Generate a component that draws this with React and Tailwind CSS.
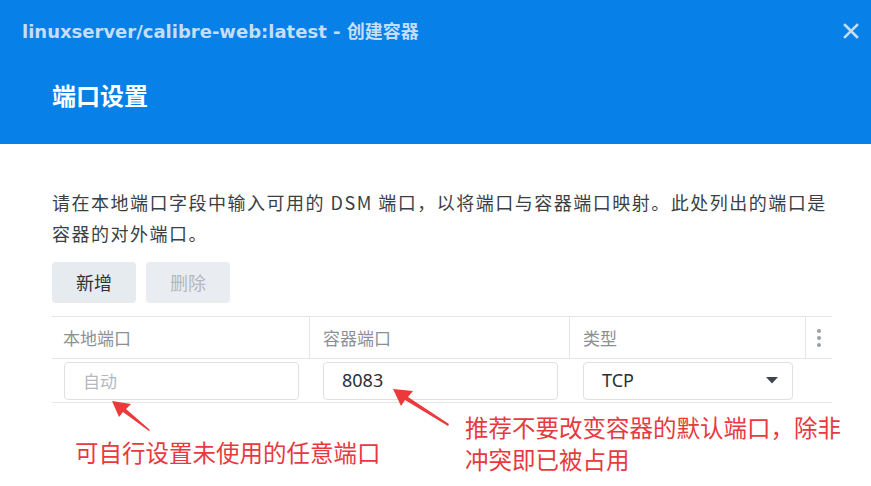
import React from "react";

const cjk = { fontFamily: '"Noto Sans CJK SC", "Noto Sans", sans-serif' };

export default function App() {
  return (
    <div className="relative w-[871px] h-[486px] overflow-hidden bg-white" style={cjk}>
      {/* Header */}
      <div className="h-[144px] bg-[#0780e8] flex flex-col">
        <div className="h-[62px] flex items-center justify-between pl-[22px] pr-[12px]">
          <div
            className="text-[18px] font-bold text-[#c4defa] leading-none"
            style={{ fontFamily: '"DejaVu Sans", "Noto Sans CJK SC", sans-serif' }}
          >
            linuxserver/calibre-web:latest - <span style={cjk} className="font-bold">创建容器</span>
          </div>
          <svg width="16" height="16" viewBox="0 0 16 16">
            <path d="M2 2 L14 14 M14 2 L2 14" stroke="#c4defa" strokeWidth="2.6" strokeLinecap="square" />
          </svg>
        </div>
        <div className="pl-[52px] mt-[21px] text-[24px] font-bold text-white leading-none">
          端口设置
        </div>
      </div>

      {/* Body */}
      <div className="pl-[52px] pt-[43px]">
        <p className="w-[800px] text-[18px] leading-[31px] text-[#3a3f45] tracking-[1.5px] whitespace-nowrap">
          请在本地端口字段中输入可用的 DSM 端口，以将端口与容器端口映射。此处列出的端口是
          <br />
          容器的对外端口。
        </p>

        <div className="mt-[13px] flex gap-[10px]">
          <div className="w-[84px] h-[41px] rounded-[4px] bg-[#e6ebf0] flex items-center justify-center text-[18px] text-[#2e3338]">
            新增
          </div>
          <div className="w-[84px] h-[41px] rounded-[4px] bg-[#e9edf1] flex items-center justify-center text-[18px] text-[#b2b8bf]">
            删除
          </div>
        </div>

        {/* Table */}
        <div className="mt-[13px] w-[780px] border-t border-[#e3e6ea]">
          <div className="flex h-[42px] border-b border-[#e3e6ea] text-[17px] text-[#8c9096]">
            <div className="w-[258px] flex items-center pl-[11px] border-r border-[#e3e6ea]">本地端口</div>
            <div className="w-[260px] flex items-center pl-[13px] border-r border-[#e3e6ea]">容器端口</div>
            <div className="w-[236px] flex items-center pl-[13px] border-r border-[#e3e6ea]">类型</div>
            <div className="flex-1 flex flex-col items-center justify-center gap-[3px]">
              <span className="w-[4px] h-[4px] rounded-full bg-[#9aa0a6]" />
              <span className="w-[4px] h-[4px] rounded-full bg-[#9aa0a6]" />
              <span className="w-[4px] h-[4px] rounded-full bg-[#9aa0a6]" />
            </div>
          </div>
          <div className="flex h-[44px] items-center border-b border-[#e3e6ea]">
            <div className="w-[258px] pl-[12px] pr-[11px]">
              <div className="h-[38px] rounded-[4px] border border-[#dde1e6] flex items-center pl-[18px] text-[17px] text-[#b5b9bf]">
                自动
              </div>
            </div>
            <div className="w-[260px] pl-[13px] pr-[12px]">
              <div
                className="h-[38px] rounded-[4px] border border-[#dde1e6] flex items-center pl-[18px] text-[18px] text-[#2b3036]"
                style={{ fontFamily: '"Noto Sans", sans-serif' }}
              >
                8083
              </div>
            </div>
            <div className="w-[236px] pl-[13px] pr-[13px]">
              <div className="h-[38px] rounded-[4px] border border-[#dde1e6] flex items-center justify-between pl-[18px] pr-[14px] text-[18px] text-[#2b3036]">
                <span style={{ fontFamily: '"Noto Sans", sans-serif' }}>TCP</span>
                <svg width="12" height="7" viewBox="0 0 12 7">
                  <path d="M0 0 L12 0 L6 6.5 Z" fill="#3f454c" />
                </svg>
              </div>
            </div>
          </div>
        </div>

        {/* Annotations */}
        <div className="flex items-start text-[#e8393f] text-[23.5px] leading-[32px]">
          <div className="w-[413px] shrink-0 pl-[23px] mt-[33px]">可自行设置未使用的任意端口</div>
          <div className="mt-[8px] w-[400px] shrink-0">
            推荐不要改变容器的默认端口，除非
            <br />
            冲突即已被占用
          </div>
        </div>
      </div>

      {/* Arrows */}
      <svg className="absolute left-0 top-0 pointer-events-none" width="871" height="486">
        <g fill="#ec3a3a">
          <path d="M112 401 L131 404 L126 409 L150 430 L149 431 L123 412 L119 417 Z" />
          <path d="M393 389 L413 391 L408 397 L449 424 L448 426 L405 400 L401 406 Z" />
        </g>
      </svg>
    </div>
  );
}
